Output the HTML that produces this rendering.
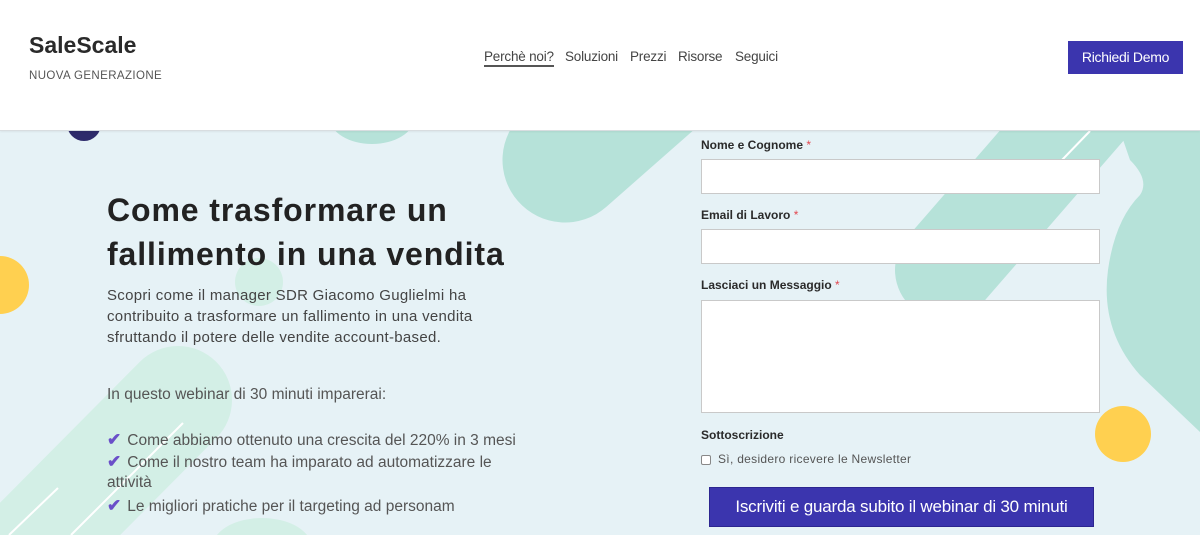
<!DOCTYPE html>
<html><head><meta charset="utf-8"><style>
*{margin:0;padding:0;box-sizing:border-box}
body{width:1200px;height:535px;overflow:hidden;background:#e6f2f6;font-family:"Liberation Sans",sans-serif;position:relative}
.bg{position:absolute;left:0;top:0}
header{position:absolute;left:0;top:0;width:1200px;height:131px;background:#fff;border-bottom:1px solid #d8dde0;box-shadow:0 1px 2px rgba(0,0,0,.06);z-index:2}
.logo{position:absolute;left:29px;top:32px;font-size:23px;font-weight:bold;color:#2a2a2a}
.tag{position:absolute;left:29px;top:70px;font-size:11.5px;color:#555;letter-spacing:.4px}
nav{position:absolute;top:49px;left:484px;font-size:13.5px;color:#444}
nav span{position:absolute;white-space:nowrap;letter-spacing:-.2px}
nav .a{border-bottom:2px solid #555;padding-bottom:1px}
.demo{position:absolute;left:1068px;top:41px;width:115px;height:33px;background:#3b35ae;color:#fff;font-size:14px;text-align:center;line-height:33px;letter-spacing:-.3px}
.t{position:absolute;color:#222;z-index:1}
h1{position:absolute;left:107px;top:188px;font-size:32px;line-height:44px;font-weight:bold;color:#222;letter-spacing:.9px}
.p{left:107px;top:285px;font-size:15px;line-height:21px;color:#444;width:400px;letter-spacing:.3px}
.li{left:107px;font-size:15.5px;color:#555;white-space:nowrap}
.ck{color:#6a4fc9;font-size:17px;margin-right:6px;font-weight:bold}
.lab{position:absolute;left:701px;font-size:12px;font-weight:bold;color:#2a2a2a}
.lab i{color:#e2474f;font-style:normal;font-weight:normal}
.in{position:absolute;left:701px;width:399px;background:#fff;border:1px solid #c9c9c9}
.cb{position:absolute;left:701px;top:455px;width:10px;height:10px;border:1px solid #888;border-radius:2px;background:#fff}
.cbt{position:absolute;left:718px;top:452px;font-size:12px;color:#555;letter-spacing:.3px}
.btn{position:absolute;left:709px;top:487px;width:385px;height:40px;background:#3b35ae;border:1px solid #2c2690;color:#fff;font-size:17px;text-align:center;line-height:38px;letter-spacing:-.2px}
</style></head><body>
<svg class="bg" width="1200" height="535" viewBox="0 0 1200 535">
<line x1="-60" y1="640" x2="178" y2="400" stroke="#d3efe6" stroke-width="108" stroke-linecap="round"/>
<circle cx="259" cy="282" r="24" fill="#d3efe6"/>
<ellipse cx="262" cy="548" rx="50" ry="30" fill="#d3efe6"/>
<line x1="565" y1="160" x2="690" y2="50" stroke="#b6e2d9" stroke-width="125" stroke-linecap="round"/>
<ellipse cx="372" cy="118" rx="42" ry="26" fill="#b6e2d9"/>
<line x1="945" y1="270" x2="1110" y2="80" stroke="#b6e2d9" stroke-width="100" stroke-linecap="round"/>
<path d="M1120,131 L1200,131 L1200,432 L1140,375 Q1100,330 1108,270 Q1115,220 1140,195 Q1150,180 1130,160 Z" fill="#b6e2d9"/>
<line x1="1090" y1="131" x2="1062" y2="160" stroke="#fff" stroke-width="2"/>
<line x1="183" y1="423" x2="71" y2="535" stroke="#fff" stroke-width="2"/>
<line x1="58" y1="488" x2="9" y2="535" stroke="#fff" stroke-width="2"/>
<circle cx="84" cy="124" r="17" fill="#2e2b6b"/>
<circle cx="0" cy="285" r="29" fill="#ffd050"/>
<circle cx="1123" cy="434" r="28" fill="#ffd050"/>
</svg>
<header>
<div class="logo">SaleScale</div>
<div class="tag">NUOVA GENERAZIONE</div>
<nav><span class="a" style="left:0">Perchè noi?</span><span style="left:81px">Soluzioni</span><span style="left:146px">Prezzi</span><span style="left:194px">Risorse</span><span style="left:251px">Seguici</span></nav>
<div class="demo">Richiedi Demo</div>
</header>
<h1>Come trasformare un<br>fallimento in una vendita</h1>
<div class="t p">Scopri come il manager SDR Giacomo Guglielmi ha contribuito a trasformare un fallimento in una vendita sfruttando il potere delle vendite account-based.</div>
<div class="t li" style="top:386px">In questo webinar di 30 minuti imparerai:</div>
<div class="t li" style="top:430px"><span class="ck">✔</span>Come abbiamo ottenuto una crescita del 220% in 3 mesi</div>
<div class="t li" style="top:452px"><span class="ck">✔</span>Come il nostro team ha imparato ad automatizzare le</div>
<div class="t li" style="top:474px">attività</div>
<div class="t li" style="top:496px"><span class="ck">✔</span>Le migliori pratiche per il targeting ad personam</div>
<div class="lab" style="top:138px">Nome e Cognome <i>*</i></div>
<div class="in" style="top:159px;height:35px"></div>
<div class="lab" style="top:208px">Email di Lavoro <i>*</i></div>
<div class="in" style="top:229px;height:35px"></div>
<div class="lab" style="top:278px">Lasciaci un Messaggio <i>*</i></div>
<div class="in" style="top:300px;height:113px"></div>
<div class="lab" style="top:428px">Sottoscrizione</div>
<div class="cb"></div>
<div class="cbt">Sì, desidero ricevere le Newsletter</div>
<div class="btn">Iscriviti e guarda subito il webinar di 30 minuti</div>
</body></html>
